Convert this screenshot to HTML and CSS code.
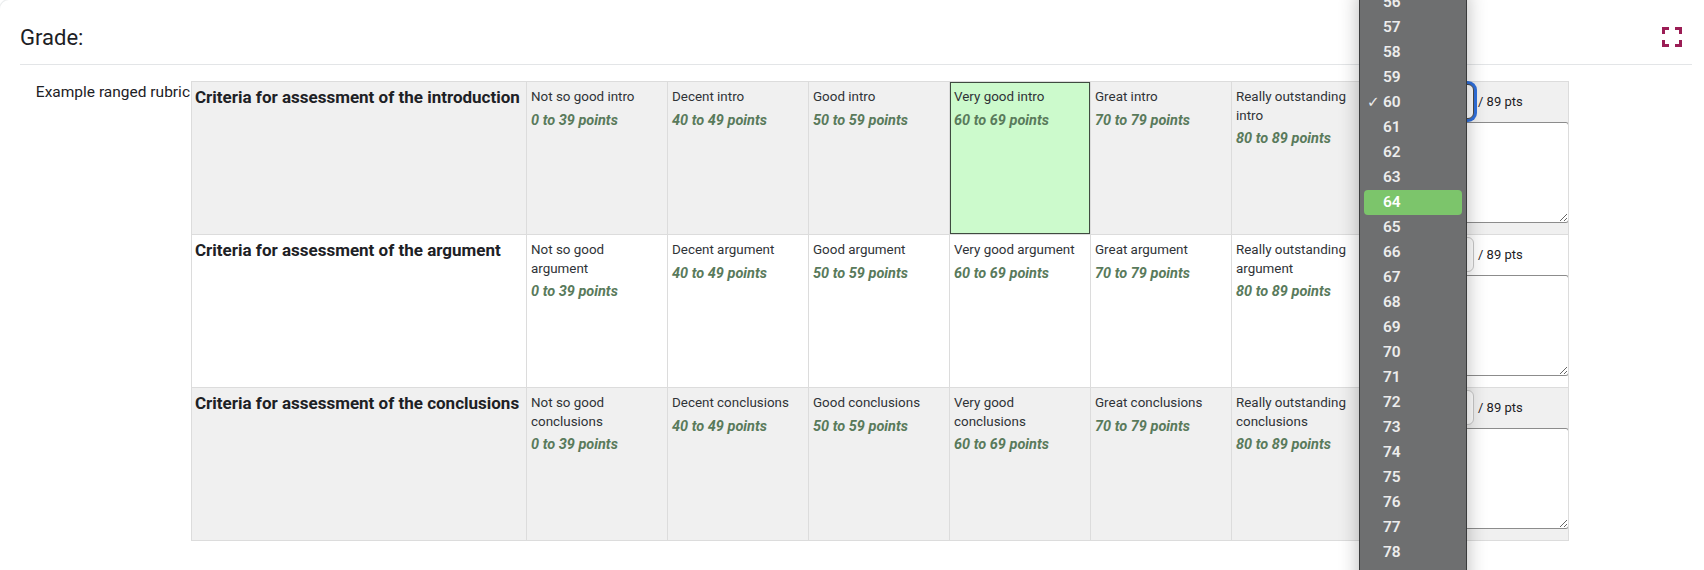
FILE: index.html
```html
<!DOCTYPE html>
<html lang="en">
<head>
<meta charset="utf-8">
<title>Grade</title>
<link rel="stylesheet" href="styles.css">
</head>
<body>
<div class="page">
  <div class="header">
    <h3 class="title">Grade:</h3>
    <svg class="fs-icon" width="20" height="20" viewBox="0 0 20 20" aria-hidden="true">
      <path d="M1.5 7V1.5H7M13 1.5H18.5V7M1.5 13V18.5H7M13 18.5H18.5V13" fill="none" stroke="#9b1d55" stroke-width="3"/>
    </svg>
  </div>
  <div class="content">
    <div class="label">Example ranged rubric</div>
    <table class="rubric">
      <colgroup>
        <col class="c-crit"><col class="c-lvl"><col class="c-lvl"><col class="c-lvl"><col class="c-lvl"><col class="c-lvl"><col class="c-lvl"><col class="c-rem">
      </colgroup>
      <tr class="odd">
        <td class="crit">Criteria for assessment of the introduction</td>
        <td class="lvl"><div class="desc">Not so good intro</div><div class="pts">0 to 39 points</div></td>
        <td class="lvl"><div class="desc">Decent intro</div><div class="pts">40 to 49 points</div></td>
        <td class="lvl"><div class="desc">Good intro</div><div class="pts">50 to 59 points</div></td>
        <td class="lvl checked"><div class="desc">Very good intro</div><div class="pts">60 to 69 points</div></td>
        <td class="lvl"><div class="desc">Great intro</div><div class="pts">70 to 79 points</div></td>
        <td class="lvl"><div class="desc">Really outstanding intro</div><div class="pts">80 to 89 points</div></td>
        <td class="rem">
          <div class="score"><span class="sel focus">60</span><span class="max">/ 89 pts</span></div>
          <textarea class="remark"></textarea>
        </td>
      </tr>
      <tr class="even">
        <td class="crit">Criteria for assessment of the argument</td>
        <td class="lvl"><div class="desc">Not so good argument</div><div class="pts">0 to 39 points</div></td>
        <td class="lvl"><div class="desc">Decent argument</div><div class="pts">40 to 49 points</div></td>
        <td class="lvl"><div class="desc">Good argument</div><div class="pts">50 to 59 points</div></td>
        <td class="lvl"><div class="desc">Very good argument</div><div class="pts">60 to 69 points</div></td>
        <td class="lvl"><div class="desc">Great argument</div><div class="pts">70 to 79 points</div></td>
        <td class="lvl"><div class="desc">Really outstanding argument</div><div class="pts">80 to 89 points</div></td>
        <td class="rem">
          <div class="score"><span class="sel"></span><span class="max">/ 89 pts</span></div>
          <textarea class="remark"></textarea>
        </td>
      </tr>
      <tr class="odd">
        <td class="crit">Criteria for assessment of the conclusions</td>
        <td class="lvl"><div class="desc">Not so good conclusions</div><div class="pts">0 to 39 points</div></td>
        <td class="lvl"><div class="desc">Decent conclusions</div><div class="pts">40 to 49 points</div></td>
        <td class="lvl"><div class="desc">Good conclusions</div><div class="pts">50 to 59 points</div></td>
        <td class="lvl"><div class="desc">Very good conclusions</div><div class="pts">60 to 69 points</div></td>
        <td class="lvl"><div class="desc">Great conclusions</div><div class="pts">70 to 79 points</div></td>
        <td class="lvl"><div class="desc">Really outstanding conclusions</div><div class="pts">80 to 89 points</div></td>
        <td class="rem">
          <div class="score"><span class="sel"></span><span class="max">/ 89 pts</span></div>
          <textarea class="remark"></textarea>
        </td>
      </tr>
    </table>
  </div>
  <ul class="dropdown">
    <li>56</li><li>57</li><li>58</li><li>59</li>
    <li class="current"><span class="check">✓</span>60</li>
    <li>61</li><li>62</li><li>63</li>
    <li class="hover">64</li>
    <li>65</li><li>66</li><li>67</li><li>68</li><li>69</li><li>70</li><li>71</li><li>72</li><li>73</li><li>74</li><li>75</li><li>76</li><li>77</li><li>78</li><li>79</li>
  </ul>
</div>
</body>
</html>
```
FILE: styles.css
```css
* { box-sizing: border-box; }
html, body {
  margin: 0;
  padding: 0;
  background: #fff;
}
body {
  font-family: Roboto, "Liberation Sans", sans-serif;
  color: #1d2125;
  overflow: hidden;
  height: 570px;
}
.page {
  position: relative;
  height: 570px;
  border-top: 1px solid #eceeef;
  border-left: 1px solid #eceeef;
  border-top-left-radius: 10px;
  margin: -1px 0 0 -1px;
}
.header {
  display: flex;
  justify-content: space-between;
  align-items: flex-start;
  height: 65px;
  margin: 0 12px 0 20px;
  border-bottom: 1px solid #e3e5e7;
}
.title {
  margin: 0;
  padding-top: 25px;
  font-size: 22px;
  line-height: 25px;
  font-weight: 400;
}
.fs-icon {
  margin-top: 27px;
  margin-right: 10px;
}
.content {
  display: flex;
  align-items: flex-start;
  margin-top: 16px;
}
.label {
  width: 191px;
  flex: none;
  text-align: right;
  padding-right: 1px;
  font-size: 15.5px;
  line-height: 22px;
}
.rubric {
  width: 1378px;
  table-layout: fixed;
  border-collapse: collapse;
  flex: none;
}
.c-crit { width: 335px; }
.c-lvl { width: 141px; }
.c-rem { width: 196px; }
.rubric tr { height: 153px; }
.rubric td {
  border: 1px solid #dcdcdc;
  vertical-align: top;
}
.odd td { background: #f0f0f0; }
.even td { background: #fff; }
.crit {
  padding: 5px 3px;
  font-size: 17px;
  line-height: 20px;
  font-weight: 700;
  white-space: nowrap;
}
.lvl {
  padding: 6px 10px 4px 4px;
  font-size: 13.4px;
  line-height: 18.5px;
}
.desc {
  color: #2f3337;
}
.pts {
  margin-top: 5px;
  font-size: 14.5px;
  font-weight: 700;
  font-style: italic;
  color: #597a5b;
}
.odd td.checked {
  background: #ccfacc;
  box-shadow: inset 0 0 0 1px #3f4a40;
}
.rem {
  padding: 2px 0 0 4px;
  overflow: visible;
}
.score {
  display: flex;
  align-items: center;
  gap: 4px;
  font-size: 13px;
}
.sel {
  display: block;
  width: 97px;
  height: 35px;
  border: 1px solid #c9c9c9;
  border-radius: 6px;
  background: #fff;
}
.sel.focus {
  border-color: #4a4a4a;
  box-shadow: 0 0 0 3px #2f6fdc;
}
.max {
  color: #1d2125;
}
.remark {
  display: block;
  width: 192px;
  height: 101px;
  margin: 3px 0 0;
  border: 1px solid #8c8c8c;
  border-radius: 3px;
  background: #fff;
  resize: both;
  font-family: inherit;
}
.dropdown {
  position: absolute;
  left: 1359px;
  top: -16px;
  width: 108px;
  margin: 0;
  padding: 5px 0;
  list-style: none;
  background: #6e6f70;
  border: 1px solid #3a3b3c;
  border-radius: 6px;
  box-shadow: 0 6px 20px rgba(0, 0, 0, 0.28);
}
.dropdown li {
  position: relative;
  height: 25px;
  margin: 0 4px;
  padding-left: 19px;
  line-height: 25px;
  font-size: 15.5px;
  font-weight: 600;
  color: #ececec;
  border-radius: 4px;
}
.dropdown li.hover {
  background: #7cc56b;
  color: #fff;
}
.check {
  position: absolute;
  left: 3px;
  top: 0;
  font-family: "DejaVu Sans", sans-serif;
  font-size: 15px;
  font-weight: 400;
}
```
